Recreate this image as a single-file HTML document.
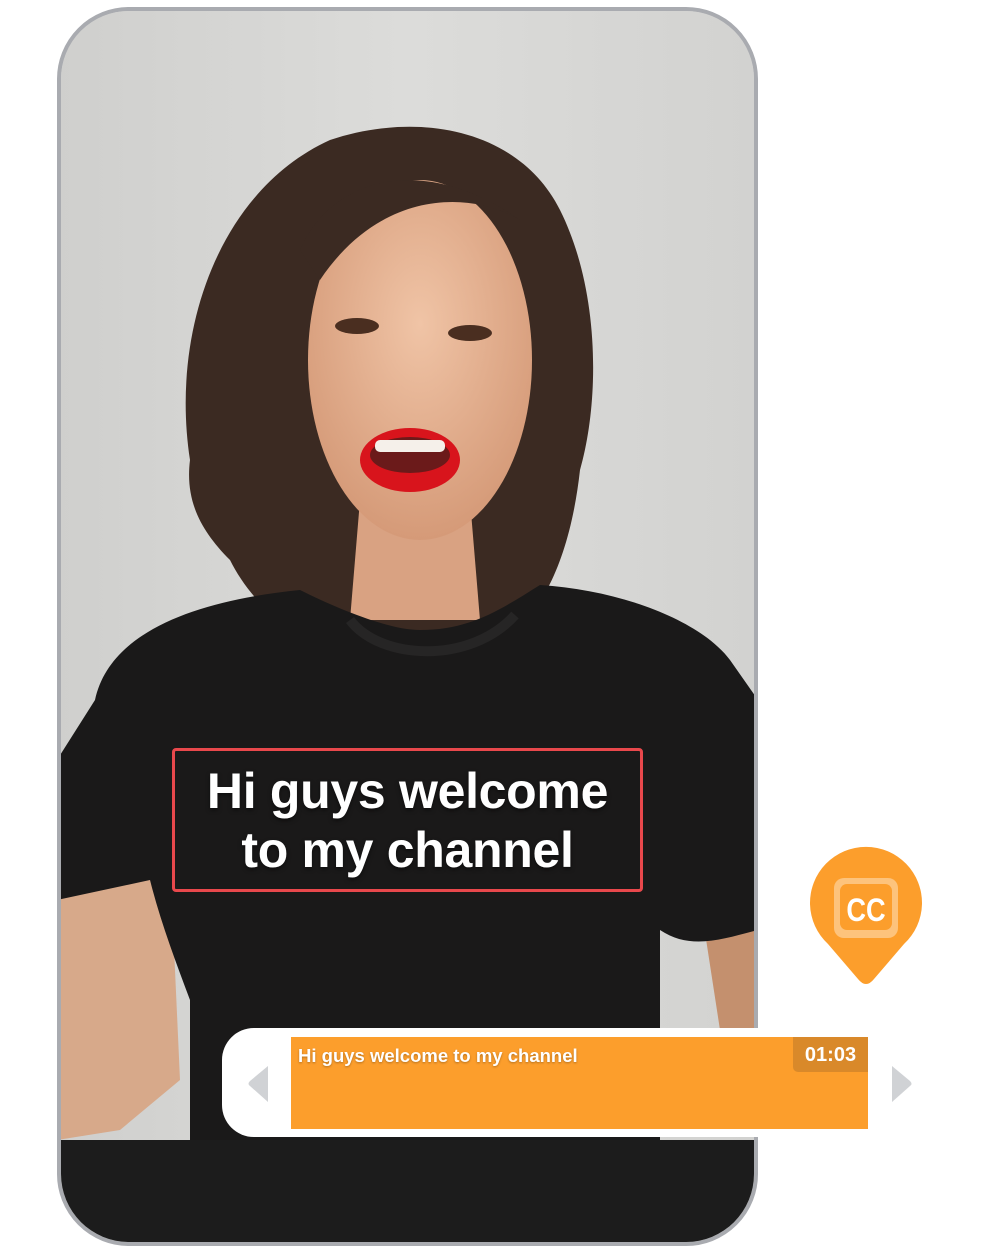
<!DOCTYPE html>
<html><head><meta charset="utf-8"><style>
*{margin:0;padding:0;box-sizing:border-box}
body{width:1000px;height:1251px;background:#fff;position:relative;overflow:hidden;font-family:"Liberation Sans",sans-serif}
.phone{position:absolute;left:57px;top:7px;width:701px;height:1239px;border-radius:72px;border:4px solid #a9abb0;overflow:hidden;background:#d3d3d1}
.cap{position:absolute;width:471px;height:144px;border:3px solid #e9484c;border-radius:4px;color:#fff;font-weight:bold;font-size:50px;line-height:59px;text-align:center;padding-top:11px;text-shadow:0 2px 4px rgba(0,0,0,.5);letter-spacing:-0.3px;white-space:nowrap}
.bar{position:absolute;left:222px;top:1028px;width:536px;height:109px;background:#fff;border-radius:32px 0 0 32px}
.orange{position:absolute;left:291px;top:1037px;width:577px;height:92px;background:#fc9e2c}
.otext{position:absolute;left:298px;top:1045px;color:#fff;font-weight:bold;font-size:18.5px;text-shadow:0 1px 2px rgba(0,0,0,.3)}
.ts{position:absolute;left:793px;top:1037px;width:75px;height:35px;background:#d9892a;border-radius:0 0 0 5px;color:#fff;font-weight:bold;font-size:20px;text-align:center;line-height:36px}
</style></head><body>
<div class="phone">
<svg width="701" height="1239" viewBox="57 7 701 1239" style="position:absolute;left:-4px;top:-4px">
<defs>
<linearGradient id="bg" x1="0" y1="0" x2="1" y2="0"><stop offset="0" stop-color="#cfcfcd"/><stop offset="0.5" stop-color="#dcdcda"/><stop offset="1" stop-color="#d2d2d0"/></linearGradient>
<radialGradient id="skin" cx="0.5" cy="0.4" r="0.6"><stop offset="0" stop-color="#f0c4a6"/><stop offset="1" stop-color="#d59a78"/></radialGradient>
</defs>
<rect x="57" y="7" width="701" height="1239" fill="url(#bg)"/>
<path d="M190 460 C170 330 220 190 330 140 C420 110 520 130 560 210 C600 290 600 400 580 470 C570 560 540 620 500 640 L350 660 C290 640 250 600 230 560 C200 530 185 500 190 460Z" fill="#3b2a22"/>
<path d="M360 500 L470 500 L480 620 L350 620Z" fill="#d9a282"/>
<ellipse cx="420" cy="360" rx="112" ry="180" fill="url(#skin)"/>
<path d="M300 250 C330 180 420 150 520 220 C470 190 380 190 320 280Z" fill="#3b2a22"/>
<ellipse cx="357" cy="326" rx="22" ry="8" fill="#4a2e20"/>
<ellipse cx="470" cy="333" rx="22" ry="8" fill="#4a2e20"/>
<ellipse cx="410" cy="460" rx="50" ry="32" fill="#d8141c"/>
<ellipse cx="410" cy="455" rx="40" ry="18" fill="#6b1a1a"/>
<rect x="375" y="440" width="70" height="12" rx="5" fill="#f5f0ea"/>
<path d="M57 880 L170 860 L180 1080 L120 1130 L57 1140Z" fill="#d7a98a"/>
<path d="M700 900 L758 880 L758 1030 L720 1030Z" fill="#c4906e"/>
<path d="M95 700 C110 630 200 600 300 590 C340 610 390 630 420 630 C470 630 500 610 540 585 C620 590 700 620 730 660 L758 700 L758 930 C720 940 690 950 660 930 L660 1246 L190 1246 L190 1000 C175 960 160 920 150 880 L57 900 L57 760Z" fill="#1a1919"/>
<path d="M350 620 C380 660 470 665 515 615" stroke="#262525" stroke-width="10" fill="none"/>
<rect x="57" y="1140" width="701" height="110" fill="#1c1c1c"/>
</svg>
<div class="cap" style="left:111px;top:737px">Hi guys welcome<br>to my channel</div>
</div>
<div class="bar"></div>
<div class="orange"></div>
<div class="otext">Hi guys welcome to my channel</div>
<div class="ts">01:03</div>
<svg style="position:absolute;left:246px;top:1064px" width="24" height="40"><path d="M22 2 L22 38 L4 22 Q1 20 4 17Z" fill="#d0d2d5"/></svg>
<svg style="position:absolute;left:890px;top:1064px" width="24" height="40"><path d="M2 2 L2 38 L20 22 Q23 20 20 17Z" fill="#d0d2d5"/></svg>
<svg style="position:absolute;left:800px;top:845px" width="132" height="145" viewBox="800 845 132 145">
<path d="M866 984 Q862 984 858 979 L828 944 A56 56 0 1 1 904 944 L874 979 Q870 984 866 984Z" fill="#fc9e2c"/>
<rect x="834" y="878" width="64" height="60" rx="10" fill="#fdc37c"/>
<rect x="840" y="884" width="52" height="46" rx="7" fill="#fc9e2c"/>
<text x="866" y="921" text-anchor="middle" font-family="Liberation Sans" font-weight="bold" font-size="32" fill="#fff" transform="translate(866 0) scale(0.85 1) translate(-866 0)">CC</text>
</svg>
</body></html>
